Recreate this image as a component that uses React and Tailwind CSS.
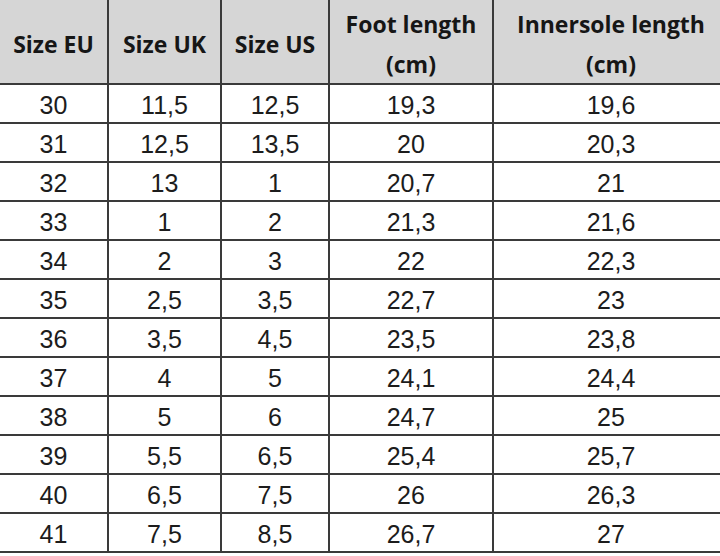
const rows = [
  ["30", "11,5", "12,5", "19,3", "19,6"],
  ["31", "12,5", "13,5", "20", "20,3"],
  ["32", "13", "1", "20,7", "21"],
  ["33", "1", "2", "21,3", "21,6"],
  ["34", "2", "3", "22", "22,3"],
  ["35", "2,5", "3,5", "22,7", "23"],
  ["36", "3,5", "4,5", "23,5", "23,8"],
  ["37", "4", "5", "24,1", "24,4"],
  ["38", "5", "6", "24,7", "25"],
  ["39", "5,5", "6,5", "25,4", "25,7"],
  ["40", "6,5", "7,5", "26", "26,3"],
  ["41", "7,5", "8,5", "26,7", "27"],
];

const headers = [
  ["Size EU"],
  ["Size UK"],
  ["Size US"],
  ["Foot length", "(cm)"],
  ["Innersole length", "(cm)"],
];

const cell = "flex items-center justify-center border-b-2 border-r-2 border-[#3a3a3a]";

const App = () => {
  return (
    <div className="w-[720px] h-[556px] overflow-hidden bg-white">
      <div className="grid w-[730px] grid-cols-[109px_113px_108px_164px_236px]">
        {/* Header */}
        {headers.map((h, i) => (
          <div
            key={i}
            className={`${cell} h-[85px] bg-[#d6d6d6] flex-col font-['Open_Sans',sans-serif] font-bold text-[23px] leading-[40px] text-[#161616] pt-[4px]`}
          >
            {h.map((line) => (
              <span key={line}>{line}</span>
            ))}
          </div>
        ))}

        {/* Rows */}
        {rows.map((r) =>
          r.map((v, j) => (
            <div
              key={r[0] + "-" + j}
              className={`${cell} h-[39px] font-['Liberation_Sans',Arial,sans-serif] text-[25px] text-[#1c1c1c] pt-[4px]`}
            >
              {v}
            </div>
          ))
        )}
      </div>
    </div>
  );
};

export default App;
